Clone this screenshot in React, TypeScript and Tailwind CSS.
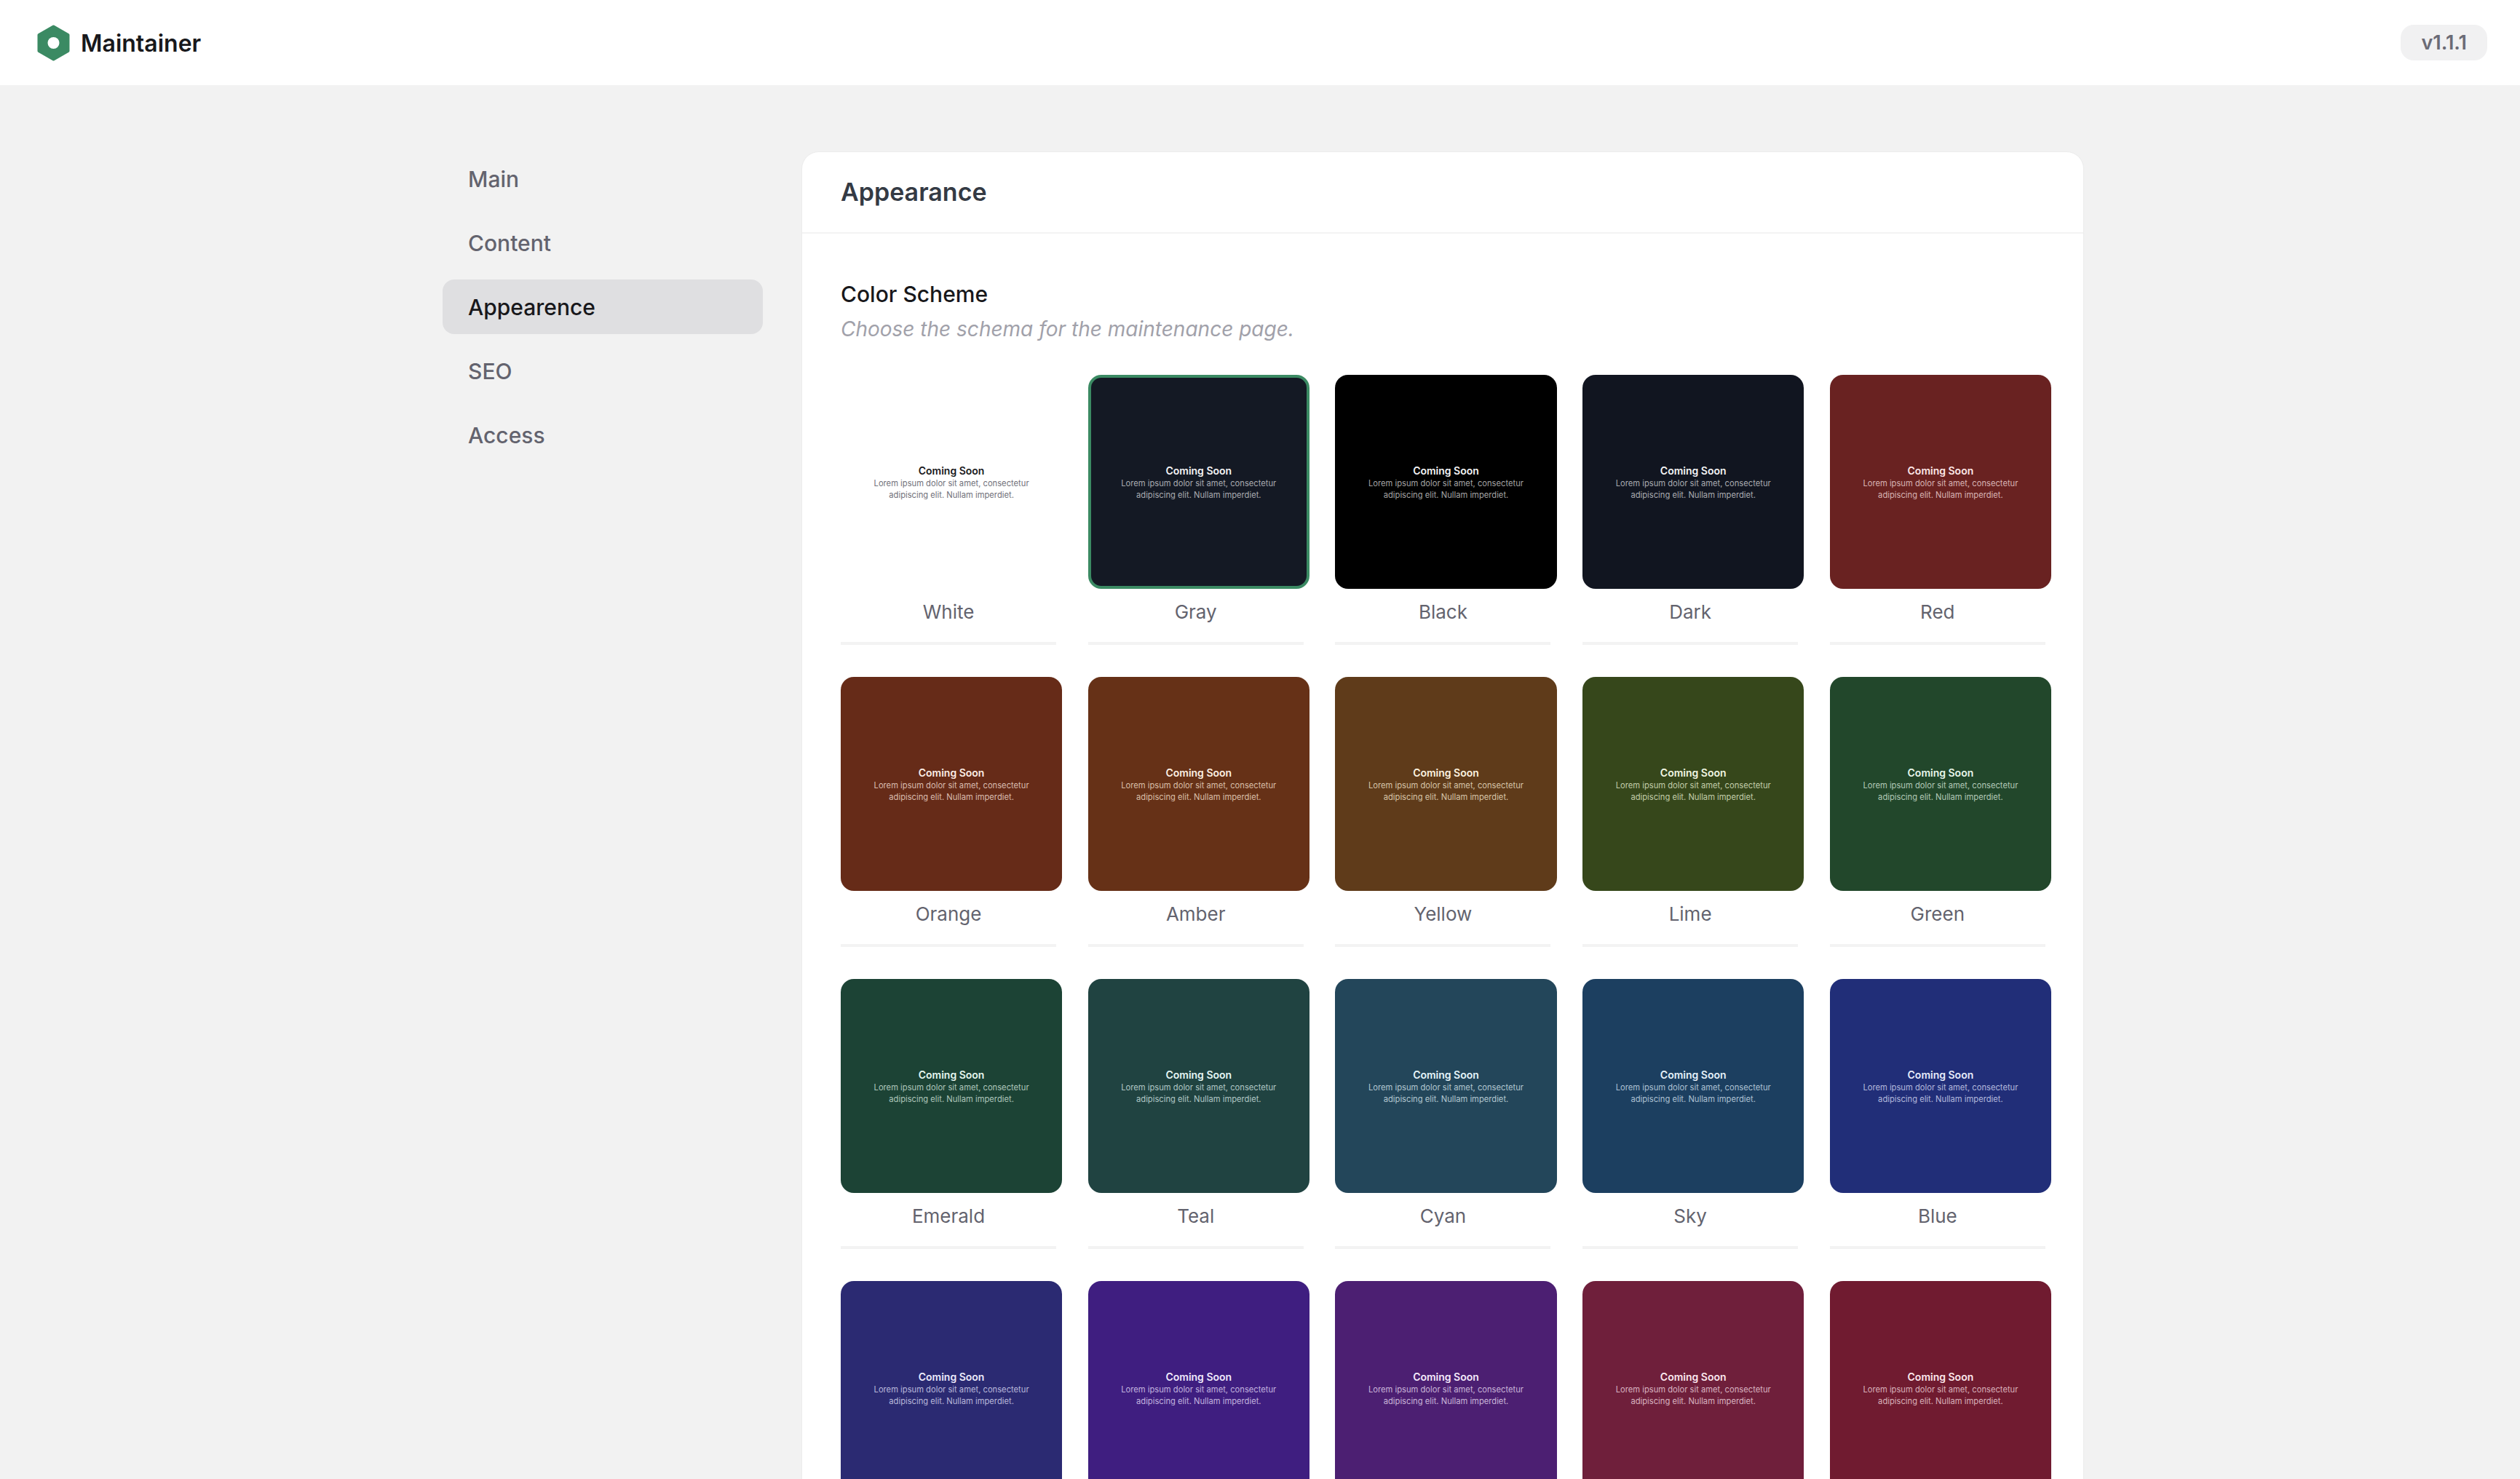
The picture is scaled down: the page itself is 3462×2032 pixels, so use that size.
const navItems = ['Main', 'Content', 'Appearence', 'SEO', 'Access']

const schemes = [
  { name: 'White', bg: 'bg-white', title: 'text-[#18181b]', body: 'text-[#71717a]' },
  { name: 'Gray', bg: 'bg-[#141924]', title: 'text-[#f4f4f5]', body: 'text-[#a9abb0]', selected: true },
  { name: 'Black', bg: 'bg-black', title: 'text-[#f4f4f5]', body: 'text-[#a3a3a3]' },
  { name: 'Dark', bg: 'bg-[#111520]', title: 'text-[#f4f4f5]', body: 'text-[#a9abb0]' },
  { name: 'Red', bg: 'bg-[#692221]', title: 'text-[#fde8e8]', body: 'text-[#d8b4b4]' },
  { name: 'Orange', bg: 'bg-[#662b18]', title: 'text-[#fdeee6]', body: 'text-[#d9bcaf]' },
  { name: 'Amber', bg: 'bg-[#663117]', title: 'text-[#fdf0e3]', body: 'text-[#d9bfa8]' },
  { name: 'Yellow', bg: 'bg-[#5f3b1a]', title: 'text-[#fdf3e0]', body: 'text-[#d6c4a8]' },
  { name: 'Lime', bg: 'bg-[#36471b]', title: 'text-[#f2f7e4]', body: 'text-[#c2cdaa]' },
  { name: 'Green', bg: 'bg-[#22472b]', title: 'text-[#e9f7ec]', body: 'text-[#b2c9b7]' },
  { name: 'Emerald', bg: 'bg-[#1c4335]', title: 'text-[#e6f7ef]', body: 'text-[#aec6bb]' },
  { name: 'Teal', bg: 'bg-[#204341]', title: 'text-[#e6f7f5]', body: 'text-[#b0c7c5]' },
  { name: 'Cyan', bg: 'bg-[#23465a]', title: 'text-[#e6f5fa]', body: 'text-[#b2c6d0]' },
  { name: 'Sky', bg: 'bg-[#1c3f60]', title: 'text-[#e6f2fb]', body: 'text-[#adc1d3]' },
  { name: 'Blue', bg: 'bg-[#212e78]', title: 'text-[#e8ecfb]', body: 'text-[#b3b9dc]' },
  // last row runs past the fold, its labels are never on screen
  { name: '', bg: 'bg-[#2b2a72]', title: 'text-[#ecebfb]', body: 'text-[#b9b8da]' },
  { name: '', bg: 'bg-[#3f1e80]', title: 'text-[#f0eafc]', body: 'text-[#c2b3df]' },
  { name: '', bg: 'bg-[#4c1f72]', title: 'text-[#f5eafb]', body: 'text-[#c9b5d8]' },
  { name: '', bg: 'bg-[#6f1f3b]', title: 'text-[#fce8ef]', body: 'text-[#d8b3c0]' },
  { name: '', bg: 'bg-[#701b30]', title: 'text-[#fde8ec]', body: 'text-[#d9b1ba]' },
]

function Logo() {
  return (
    <svg viewBox="0 0 45 50" className="w-[45px] h-[50px]">
      <path
        d="M22.5 2.5 L42.5 14 L42.5 36 L22.5 47.5 L2.5 36 L2.5 14 Z"
        fill="#3b8a63"
        stroke="#3b8a63"
        strokeWidth="4"
        strokeLinejoin="round"
      />
      <circle cx="22.5" cy="25" r="8" fill="#fff" />
    </svg>
  )
}

function Swatch({ scheme }: { scheme: (typeof schemes)[number] }) {
  return (
    <div>
      <div
        className={`h-[294px] rounded-[18px] flex flex-col items-center justify-center text-center ${scheme.bg} ${
          scheme.selected ? 'border-4 border-[#3b8a63]' : ''
        }`}
      >
        <div className={`text-[14px] leading-[19px] font-semibold ${scheme.title}`}>Coming Soon</div>
        <div className={`text-[11.2px] leading-[16px] ${scheme.body}`}>
          Lorem ipsum dolor sit amet, consectetur
          <br />
          adipiscing elit. Nullam imperdiet.
        </div>
      </div>
      <div className="w-[296px] h-[40px] mt-[12px] text-center text-[26px] leading-[40px] text-[#63636e]">
        {scheme.name}
      </div>
      <div className="w-[296px] h-1 mt-[21px] bg-[#f3f3f3]" />
    </div>
  )
}

export default function App() {
  return (
    <div className="h-screen overflow-hidden bg-[#f2f2f2] font-['Inter',sans-serif]">
      <header className="h-[117px] bg-white flex items-center justify-between pl-[51px] pr-[45px]">
        <div className="flex items-center gap-[15px]">
          <Logo />
          <span className="pt-[2px] text-[32px] font-semibold text-[#18181b]">Maintainer</span>
        </div>
        <span className="h-[49px] px-[28px] pt-[2px] flex items-center rounded-[18px] bg-[#f1f1f2] text-[27px] font-semibold text-[#6b6b76]">
          v1.1.1
        </span>
      </header>

      <main className="flex pl-[608px] pt-[91px]">
        <nav className="w-[440px] flex flex-col gap-[13px]">
          {navItems.map((item) => (
            <a
              key={item}
              className={`h-[75px] pl-[35px] pt-[1px] flex items-center rounded-[16px] text-[30px] font-medium ${
                item === 'Appearence' ? 'bg-[#dfdfe1] text-[#18181b]' : 'text-[#63636e]'
              }`}
            >
              {item}
            </a>
          ))}
        </nav>

        <section className="ml-[53px] w-[1762px] rounded-t-[24px] bg-white border border-[#ececec]">
          <div className="h-[112px] px-[53px] flex items-center border-b-2 border-[#f3f3f3]">
            <h1 className="text-[34px] font-semibold text-[#343a44] mb-[2px]">Appearance</h1>
          </div>
          <div className="pt-[63px] pl-[53px] pr-[44px]">
            <h2 className="text-[30px] leading-[40px] font-medium text-[#18181b]">Color Scheme</h2>
            <p className="mt-2 text-[28px] leading-[40px] italic text-[#a1a1aa]">
              Choose the schema for the maintenance page.
            </p>
            <div className="mt-[43px] grid grid-cols-5 gap-x-[35.5px] gap-y-[44px]">
              {schemes.map((s, i) => (
                <Swatch key={i} scheme={s} />
              ))}
            </div>
          </div>
        </section>
      </main>
    </div>
  )
}
